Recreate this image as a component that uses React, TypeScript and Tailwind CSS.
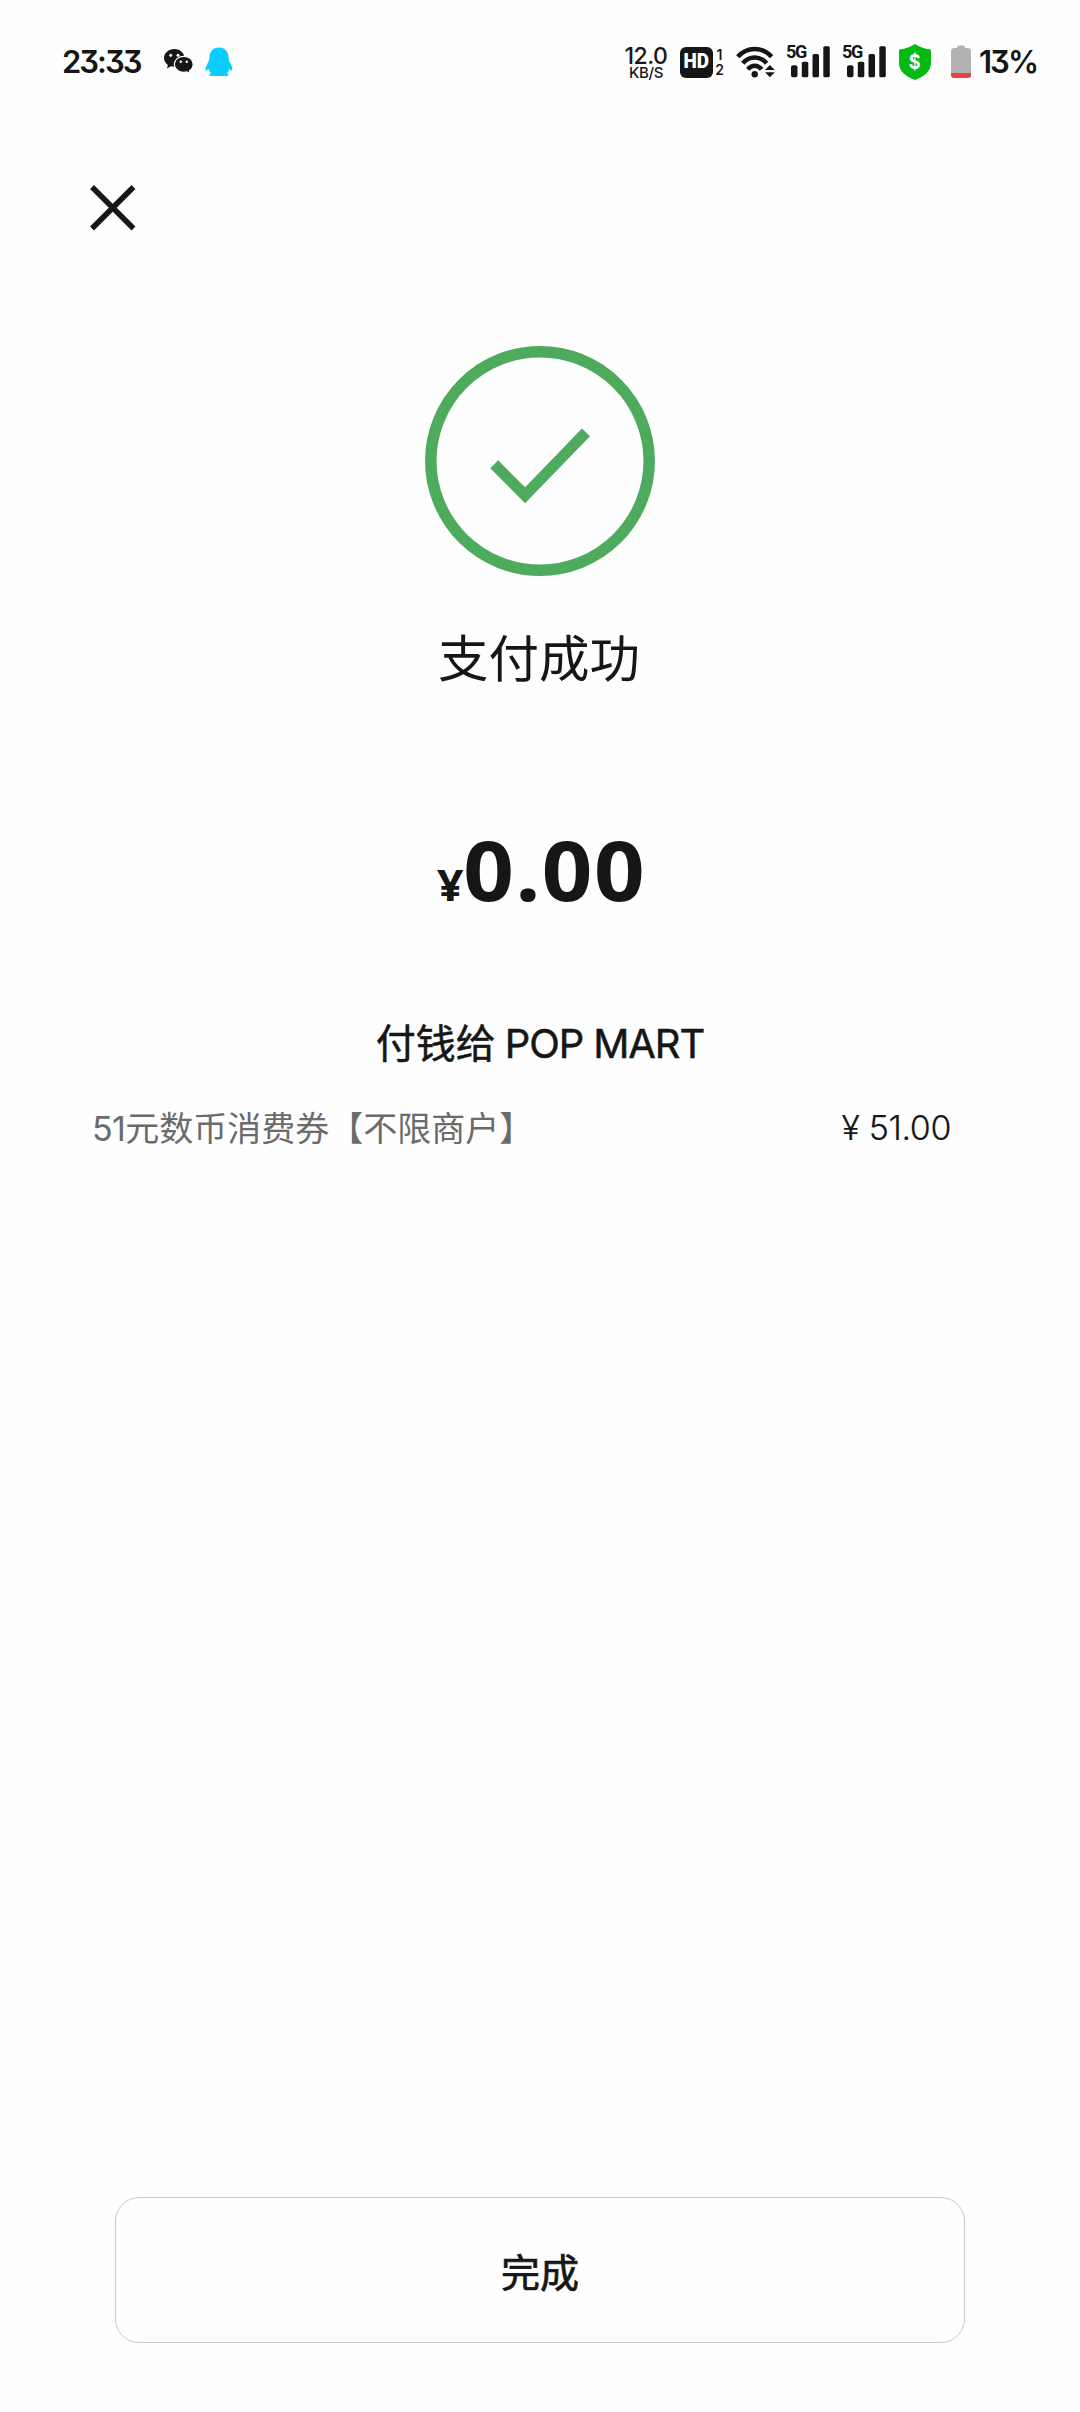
import React from 'react';

interface SignalProps {
  className?: string,
}

const WeChatIcon: React.FC = () => (
  <svg className="w-[30px] h-[26px] ml-[21px]" viewBox="0 0 30 26" fill="#161616">
    <path d="M10.5 0C4.700 0 0 4 0 9c0 2.800 1.500 5.200 3.900 6.900L3 19.500l4-2.200c1.200.3 2.400.5 3.700.5C16 17.500 20.500 13.800 20.500 9S16.200 0 10.500 0z" />
    <path d="M19.800 7.300c-5.300 0-9.500 3.500-9.500 8s4.200 8 9.500 8c1.100 0 2.100-.1 3.100-.4l3.400 1.900-.8-3c2.300-1.500 3.700-3.800 3.700-6.500 0-4.500-4.200-8-9.400-8z" stroke="#fff" strokeWidth="1.200" />
    <circle cx="6.700" cy="6.200" r="1.500" fill="#fff" />
    <circle cx="14" cy="6.200" r="1.500" fill="#fff" />
    <circle cx="16.800" cy="12.800" r="1.200" fill="#fff" />
    <circle cx="22.800" cy="12.800" r="1.200" fill="#fff" />
  </svg>
)

const QQIcon: React.FC = () => (
  <svg className="w-[28px] h-[30px] ml-[11px]" viewBox="0 0 28 30" fill="#0bcdfb">
    <path d="M14 .5C8.300.5 4.500 4.500 4.500 10c0 1.500-.2 3-.8 4.300C2 17.500.5 20.500.6 22.600c.1 1.700 1.600 1.200 3-.8.4 1.800 1.200 3.200 2.500 4.500-1.300.6-2 1.300-1.700 2 .2.600.9.7 2.300.7h14.600c1.400 0 2.100-.1 2.300-.7.3-.7-.4-1.400-1.700-2 1.300-1.300 2.100-2.700 2.500-4.500 1.400 2 2.900 2.500 3 .8.1-2.100-1.400-5.100-3.100-8.300-.6-1.300-.8-2.800-.8-4.300C23.500 4.500 19.700.5 14 .5z" />
  </svg>
)

const WifiIcon: React.FC = () => (
  <svg className="w-[39px] h-[32px] ml-[12px]" viewBox="0 0 39 32" fill="none" stroke="#161616" strokeWidth="4.500">
    <path d="M1.800 10.800C11 .3 26.400.3 35.600 10.800" />
    <path d="M6.800 17.300c6.400-7.800 17.400-7.800 23.800 0" />
    <path d="M11.800 23.300c3.600-4.800 10.200-4.800 13.800 0" />
    <circle cx="18.700" cy="28.300" r="3.200" fill="#161616" stroke="none" />
    <path d="M29 24h9.800l-4.900-5zM29 26.300h9.800l-4.900 5z" fill="#161616" stroke="none" />
  </svg>
)

const Signal: React.FC<SignalProps> = ({ className }) => (
  <div className={`relative w-[44px] h-[32px] ${className}`}>
    <svg className="w-[44px] h-[32px]" viewBox="0 0 44 32" fill="#161616">
      <rect x="5" y="19.300" width="6.500" height="12" rx="2" />
      <rect x="15.800" y="15.800" width="6.500" height="15.500" rx="1.500" />
      <rect x="26.500" y="8" width="6.500" height="23.300" rx="1.500" />
      <rect x="37.300" y="0.300" width="6.500" height="31" rx="1.500" />
    </svg>
    <span className="absolute left-0 -top-[2px] font-['Roboto',sans-serif] text-[18px] leading-[16px] font-bold tracking-[-1.4px]">5G</span>
  </div>
)

const StatusBar: React.FC = () => (
  <div className="flex items-center h-[124px] pl-[62px] text-[#161616] font-['Inter',sans-serif]">
    <div className="w-[81px] pt-[1px] text-[31px] font-semibold whitespace-nowrap tracking-[-2px] [font-feature-settings:'cv09']">23:33</div>
    <WeChatIcon />
    <QQIcon />
    <div className="flex flex-col items-center w-[46px] ml-[390px] pt-[1px]">
      <span className="text-[23px] leading-[19px] font-medium tracking-[-0.5px]">12.0</span>
      <span className="text-[15px] leading-[13px] font-medium tracking-[-0.3px]">KB/S</span>
    </div>
    <div className="flex items-center justify-center w-[33px] h-[31px] ml-[11px] rounded-[6px] bg-[#161616] text-white">
      <span className="font-['Roboto',sans-serif] text-[21px] font-black scale-x-[0.9]">HD</span>
    </div>
    <div className="flex flex-col items-center w-[9px] ml-[2px] text-[14px] leading-[15px] font-semibold">
      <span>1</span>
      <span>2</span>
    </div>
    <WifiIcon />
    <Signal className="ml-[11px]" />
    <Signal className="ml-[12px]" />
    <div className="relative flex items-center justify-center w-[32px] h-[36px] ml-[13px]">
      <svg className="absolute inset-0" viewBox="0 0 32 36" fill="#04b90f">
        <path d="M16 0c4.500 3 9.500 4.700 14.500 5.300 1 .1 1.500.7 1.500 1.700v12c0 8-6.500 13.500-16 17C6.500 32.500 0 27 0 19V7c0-1 .5-1.600 1.500-1.700C6.500 4.700 11.500 3 16 0z" />
      </svg>
      <span className="relative text-white text-[20px] leading-[22px] font-bold scale-x-[0.9]">$</span>
    </div>
    <svg className="w-[20px] h-[34px] ml-[20px]" viewBox="0 0 20 34">
      <path d="M6 3c0-1.500.8-2.500 2-2.500h4c1.200 0 2 1 2 2.500h2.500C19 3 20 4.500 20 6.500V28H0V6.500C0 4.500 1 3 3.500 3z" fill="#b3b3b3" />
      <path d="M0 28h20v2c0 2-1 3-3 3H3c-2 0-3-1-3-3z" fill="#e5433d" />
    </svg>
    <div className="ml-[8px] pt-[1px] text-[31px] font-semibold whitespace-nowrap tracking-[-2px] [font-feature-settings:'cv09']">13%</div>
  </div>
)

const App: React.FC = () => {
  return(
    <div className="flex flex-col w-[1080px] h-[2412px] bg-[#fefefe] text-[#161616] font-['Noto_Sans_CJK_SC',sans-serif]">
      <StatusBar />
      <button type="button" className="w-[46px] h-[46px] ml-[90px] mt-[61px]">
        <svg viewBox="0 0 46 46" stroke="#161616" strokeWidth="5.500">
          <path d="M2 2l41.500 41.500M43.500 2L2 43.500" />
        </svg>
      </button>
      <div className="flex flex-col items-center mt-[115px]">
        <svg className="w-[230px] h-[230px]" viewBox="0 0 230 230" fill="none" stroke="#4eab5d" strokeWidth="11.500">
          <circle cx="115" cy="115" r="109.200" />
          <path d="M69.200 118.200L100 149.300l61-63" strokeWidth="11.200" />
        </svg>
        <h1 className="mt-[43px] pr-[2px] text-[50.5px] leading-[72px]">支付成功</h1>
        <div className="flex items-baseline mt-[123px] pr-[3px] h-[110px] leading-[110px] font-['Noto_Sans',sans-serif] font-bold">
          <span className="text-[43px] scale-x-[1.08]">¥</span>
          <span className="text-[82px] tracking-[1.4px] scale-x-[1.08] ml-[7px]">0.00</span>
        </div>
        <h2 className="mt-[88px] text-[40px] leading-[58px] font-normal [-webkit-text-stroke:0.5px]">
          付钱给 <span className="font-['Inter',sans-serif] tracking-[-1.1px]">POP MART</span>
        </h2>
      </div>
      <div className="flex items-center justify-between mt-[29px] pl-[92px] pr-[129px] text-[34px] leading-[50px]">
        <div className="text-[#6b6b6b]">
          <span className="font-['Inter',sans-serif] tracking-[-0.6px]">51</span>元数币消费券【不限商户】
        </div>
        <span className="font-['Inter',sans-serif] font-light tracking-[-0.4px] [-webkit-text-stroke:0.2px]">¥ 51.00</span>
      </div>
      <button type="button" className="w-[850px] h-[146px] mx-auto mt-auto mb-[69px] rounded-[24px] border border-[#cccccc] text-[39px] font-normal [-webkit-text-stroke:0.7px]">完成</button>
    </div>
  )
}

export default App;
